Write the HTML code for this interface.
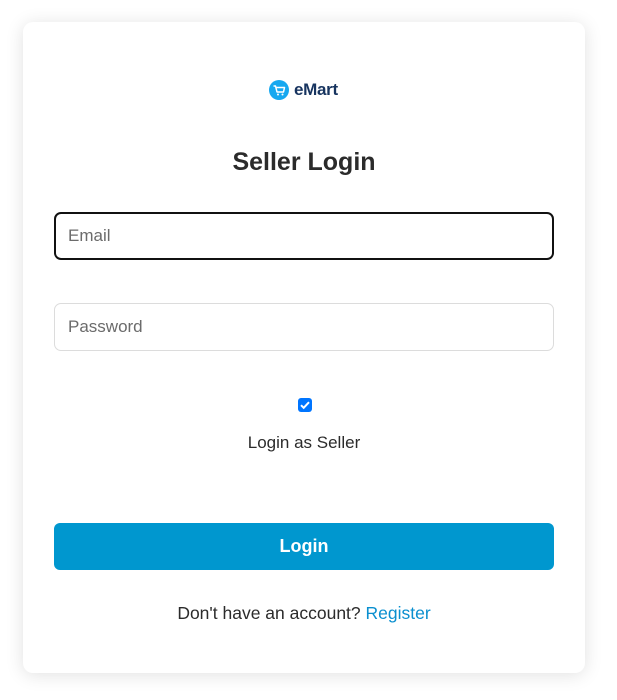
<!DOCTYPE html>
<html><head><style>
body{margin:0;width:617px;height:700px;background:#fff;font-family:"Liberation Sans",sans-serif;overflow:hidden}
.card{position:absolute;left:23px;top:22px;width:562px;height:651px;background:#fff;border-radius:10px;box-shadow:0 2px 18px rgba(0,0,0,0.12)}
.logo{position:absolute;left:269px;top:79px;display:flex;align-items:center}
.logo span{font-weight:bold;font-size:17px;color:#17345f;margin-left:5px;letter-spacing:-0.3px;margin-top:1px}
.c{position:absolute;left:23px;width:562px;text-align:center}
h1{top:148px;margin:0;font-size:25px;color:#2b2b2b}
.inp{position:absolute;left:54px;width:500px;height:48px;border:1px solid #dcdcdc;border-radius:7px;box-sizing:border-box;padding-left:13px;line-height:46px;font-size:17px;color:#6b6b6b}
.cb{position:absolute;left:298px;top:398px;width:14px;height:14px;background:#0075ff;border-radius:3px}
.lbl{top:433px;font-size:17px;color:#2b2b2b}
.btn{position:absolute;left:54px;top:523px;width:500px;height:47px;background:#0097cf;border-radius:6px;color:#fff;font-weight:bold;font-size:18px;text-align:center;line-height:47px}
.reg{top:603px;font-size:17.5px;color:#2b2b2b}
.reg a{color:#0a8fcf;text-decoration:none}
</style></head><body>
<div class="card"></div>
<div class="logo"><svg width="20" height="20" viewBox="0 0 20 20"><circle cx="10" cy="10" r="10" fill="#16a8f0"/><path d="M4.5 6h2l1.5 6h6.5l1-4.5H7" fill="none" stroke="#fff" stroke-width="1.5" stroke-linejoin="round"/><circle cx="9" cy="14.5" r="1" fill="#fff"/><circle cx="13.5" cy="14.5" r="1" fill="#fff"/></svg><span>eMart</span></div>
<h1 class="c">Seller Login</h1>
<div class="inp" style="top:212px;border:2px solid #111;padding-left:12px;line-height:44px">Email</div>
<div class="inp" style="top:303px">Password</div>
<div class="cb"><svg width="14" height="14" viewBox="0 0 14 14"><path d="M3 7.2l2.7 2.6L11 4.2" fill="none" stroke="#fff" stroke-width="2"/></svg></div>
<div class="c lbl">Login as Seller</div>
<div class="btn">Login</div>
<div class="c reg">Don't have an account? <a>Register</a></div>
</body></html>
